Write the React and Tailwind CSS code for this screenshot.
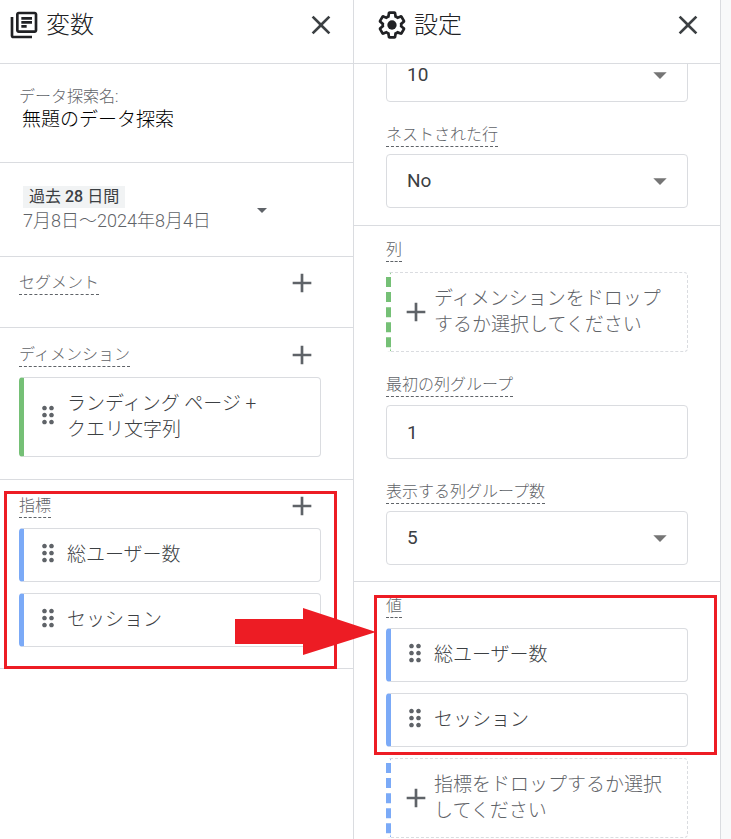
import React from 'react';
import {
  MdAdd,
  MdArrowDropDown,
  MdClose,
  MdDragIndicator,
  MdOutlineLibraryBooks,
} from 'react-icons/md';

const metrics = ['総ユーザー数', 'セッション'];

const SettingsIcon = () => (
  <svg width="32" height="32" viewBox="0 0 24 24" fill="#202124" aria-hidden="true">
    <path d="M13.85 22.25h-3.7c-.74 0-1.36-.54-1.45-1.27l-.27-1.89c-.27-.14-.53-.29-.79-.46l-1.8.72c-.7.26-1.47-.03-1.81-.65L2.2 15.53c-.35-.66-.2-1.44.36-1.88l1.53-1.19c-.01-.15-.02-.3-.02-.46 0-.15.01-.31.02-.46l-1.52-1.19c-.59-.45-.74-1.26-.37-1.88l1.85-3.19c.34-.62 1.11-.9 1.79-.63l1.81.73c.26-.17.52-.32.78-.46l.27-1.91c.09-.7.71-1.25 1.44-1.25h3.7c.74 0 1.36.54 1.45 1.27l.27 1.89c.27.14.53.29.79.46l1.8-.72c.71-.26 1.48.03 1.82.65l1.84 3.18c.36.66.2 1.44-.36 1.88l-1.52 1.19c.01.15.02.3.02.46s-.01.31-.02.46l1.52 1.19c.56.45.72 1.23.37 1.86l-1.86 3.22c-.34.62-1.11.9-1.8.63l-1.8-.72c-.26.17-.52.32-.78.46l-.27 1.91c-.1.68-.72 1.22-1.46 1.22zm-3.23-2h2.76l.37-2.55.53-.22c.44-.18.88-.44 1.34-.78l.45-.34 2.38.96 1.38-2.4-2.03-1.58.07-.56c.03-.26.06-.51.06-.78s-.03-.53-.06-.78l-.07-.56 2.03-1.58-1.39-2.4-2.39.96-.45-.35c-.42-.32-.87-.58-1.33-.77l-.52-.22-.37-2.55h-2.76l-.37 2.55-.53.21c-.44.19-.88.44-1.34.79l-.45.33-2.38-.95-1.39 2.39 2.03 1.58-.07.56a7 7 0 0 0-.06.79c0 .26.02.53.06.78l.07.56-2.03 1.58 1.38 2.4 2.39-.96.45.35c.43.33.86.58 1.33.77l.53.22.38 2.55z" />
    <circle cx="12" cy="12" r="3.5" />
  </svg>
);

const PanelHeader = ({ icon, title, className }) => (
  <header className={`flex h-16 items-start border-b border-[#dadce0] pt-[9px] pr-4 ${className}`}>
    {icon}
    <h2 className="ml-1.5 flex-1 text-2xl leading-8 font-light text-[#202124]">{title}</h2>
    <button type="button" aria-label={`${title}を閉じる`} className="text-[#3c4043]">
      <MdClose size={32} />
    </button>
  </header>
);

const labelStyle =
  'block h-6 w-fit border-b border-dashed border-[#5f6368] text-base leading-6 font-light text-[#5f6368]';

const SectionHeading = ({ title }) => (
  <div className="flex h-6 items-center justify-between">
    <h3 className={labelStyle}>{title}</h3>
    <button type="button" aria-label={`${title}を追加`} className="-my-1 mr-[3px] text-[#5f6368]">
      <MdAdd size={32} />
    </button>
  </div>
);

const Chip = ({ text, color }) => (
  <li
    className={`flex items-center rounded border border-l-[5px] border-[#dadce0] py-[13px] pr-4 pl-2.5 ${color}`}
  >
    <MdDragIndicator size={28} className="-mt-[3px] mb-px shrink-0 text-[#5f6368]" />
    <span className="ml-[5px] text-[19px] leading-[26px] font-light break-keep text-[#3c4043]">
      {text}
    </span>
  </li>
);

const DropZone = ({ text, color }) => (
  <button
    type="button"
    className={`flex w-full items-center rounded border border-l-[5px] border-dashed border-[#dadce0] py-[13px] pr-4 pl-[9px] text-left text-[#5f6368] ${color}`}
  >
    <MdAdd size={32} className="shrink-0" />
    <span className="ml-0.5 text-[19px] leading-[26px] font-light">{text}</span>
  </button>
);

const fieldStyle =
  'block h-[54px] w-full appearance-none rounded border border-[#dadce0] bg-white px-5 text-[19px] text-[#3c4043]';

const SelectField = ({ id, value, ...rest }) => (
  <div className="relative">
    <select id={id} defaultValue={value} className={fieldStyle} {...rest}>
      <option value={value}>{value}</option>
    </select>
    <MdArrowDropDown
      size={32}
      className="pointer-events-none absolute top-[11px] right-3 text-[#757575]"
    />
  </div>
);

const VariablesPanel = () => (
  <section className="border-r border-[#dadce0]">
    <PanelHeader
      title="変数"
      icon={<MdOutlineLibraryBooks size={32} className="text-[#202124]" />}
      className="pl-2"
    />

    <div className="h-[99px] border-b border-[#dadce0] px-[19px] pt-[22px]">
      <label htmlFor="name" className="block text-base leading-[22px] font-light text-[#5f6368]">
        データ探索名:
      </label>
      <input
        id="name"
        type="text"
        defaultValue="無題のデータ探索"
        className="block h-6 w-full px-[3px] text-[19px] font-light text-black"
      />
    </div>

    <div className="h-[94px] border-b border-[#dadce0] px-[23px] pt-[23px]">
      <button
        type="button"
        className="flex w-full max-w-[251px] items-center justify-between text-left"
      >
        <span>
          <span className="block w-fit bg-[#f1f3f4] px-1.5 text-base leading-[22px] text-[#3c4043]">
            過去 <span className="font-medium">28</span> 日間
          </span>
          <span className="block text-lg leading-[26px] font-light text-[#5f6368]">
            7月8日～2024年8月4日
          </span>
        </span>
        <MdArrowDropDown size={24} className="text-[#5f6368]" />
      </button>
    </div>

    <div className="border-b border-[#dadce0] px-8 pt-3.5 pb-8 pl-[19px]">
      <SectionHeading title="セグメント" />
    </div>

    <div className="border-b border-[#dadce0] px-8 pt-[15px] pb-[22px] pl-[19px]">
      <SectionHeading title="ディメンション" />
      <ul className="mt-2.5">
        <Chip text="ランディング ページ + クエリ文字列" color="border-l-[#75c076]" />
      </ul>
    </div>

    <div className="relative border-b border-[#dadce0] px-8 pt-3.5 pb-[21px] pl-[19px]">
      <SectionHeading title="指標" />
      <ul className="mt-2.5 flex flex-col gap-[11px]">
        {metrics.map((m) => (
          <Chip key={m} text={m} color="border-l-[#7baaf7]" />
        ))}
      </ul>
      <div className="pointer-events-none absolute top-[11px] right-4 -bottom-px left-1 border-3 border-[#ed1c24]" />
      <svg
        width="141"
        height="48"
        viewBox="0 0 141 48"
        className="pointer-events-none absolute top-32 -right-[23px] z-10"
        aria-hidden="true"
      >
        <path d="M0 11H68V0L141 24L68 47V36H0Z" fill="#ed1c24" />
      </svg>
    </div>
  </section>
);

const SettingsPanel = () => (
  <section className="border-r border-[#dadce0]">
    <PanelHeader title="設定" icon={<SettingsIcon />} className="pl-[22px]" />

    <div className="overflow-hidden">
      <div className="-mt-4 border-b border-[#dadce0] px-8 pb-[17px]">
        <SelectField id="rows" value="10" aria-label="表示する行数" />
        <label htmlFor="nested" className={`mt-[21px] mb-[7px] ${labelStyle}`}>
          ネストされた行
        </label>
        <SelectField id="nested" value="No" />
      </div>

      <div className="border-b border-[#dadce0] px-8 pt-3 pb-4">
        <h3 className={`mb-2.5 ${labelStyle}`}>列</h3>
        <DropZone text="ディメンションをドロップするか選択してください" color="border-l-[#75c076]" />
        <label htmlFor="first" className={`mt-[21px] mb-2 ${labelStyle}`}>
          最初の列グループ
        </label>
        <input id="first" type="text" defaultValue="1" className={fieldStyle} />
        <label htmlFor="groups" className={`mt-[21px] mb-[7px] ${labelStyle}`}>
          表示する列グループ数
        </label>
        <SelectField id="groups" value="5" />
      </div>

      <div className="px-8 pt-3">
        <div className="relative">
          <h3 className={`mb-2.5 ${labelStyle}`}>値</h3>
          <ul className="flex flex-col gap-[11px]">
            {metrics.map((m) => (
              <Chip key={m} text={m} color="border-l-[#7baaf7]" />
            ))}
          </ul>
          <div className="pointer-events-none absolute top-px -right-[29px] -bottom-2 -left-3 border-3 border-[#ed1c24]" />
        </div>
        <div className="mt-[11px]">
          <DropZone text="指標をドロップするか選択してください" color="border-l-[#7baaf7]" />
        </div>
      </div>
    </div>
  </section>
);

const App = () => (
  <main
    lang="ja"
    className="grid min-h-screen grid-cols-[354fr_367fr_10px] bg-white font-[Roboto,'Noto_Sans_CJK_JP',sans-serif]"
  >
    <VariablesPanel />
    <SettingsPanel />
    <div className="bg-[#f8f9fa]" />
  </main>
);

export default App;
